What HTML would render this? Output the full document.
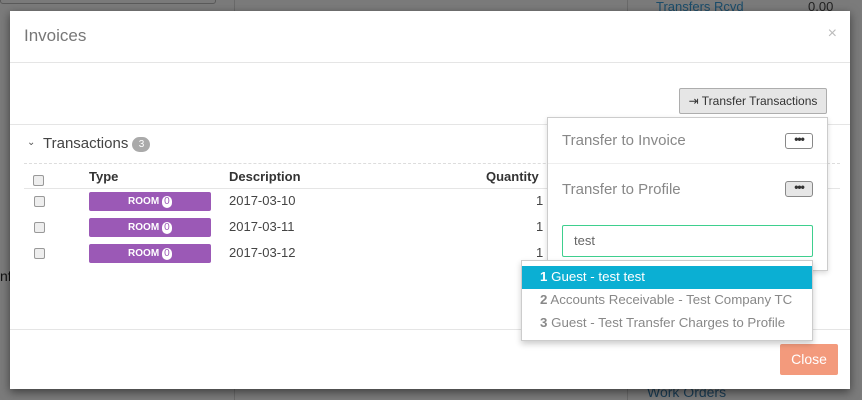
<!DOCTYPE html>
<html><head><style>
*{box-sizing:border-box;margin:0;padding:0}
body{width:862px;height:400px;overflow:hidden;background:#7b7b7b;font-family:"Liberation Sans",sans-serif;position:relative;color:#333}
.a{position:absolute}
.modal{left:10px;top:11px;width:840px;height:378px;background:#fff;box-shadow:0 3px 9px rgba(0,0,0,.5)}
.hl{height:1px;background:#e5e5e5}
.cb{width:11px;height:11px;border:1px solid #999;border-radius:2px;background:#eee}
.badge{width:122px;height:19px;background:#9b59b6;border-radius:2px;color:#fff;font-size:10px;font-weight:bold;text-align:center;line-height:19px}
.badge span{display:inline-block;background:#fff;color:#9b59b6;border-radius:5px;width:10px;height:12px;line-height:12px;font-weight:normal;font-size:10px}
.dots{width:28px;height:16px;border:1px solid #888;border-radius:3px;font-size:12px;text-align:center;line-height:11px;font-weight:bold;color:#333;letter-spacing:-1px}
</style></head><body>
<div class="a" style="left:0;top:-4px;width:216px;height:8px;border:1px solid #5a5a5a;border-radius:3px"></div>
<div class="a" style="left:234px;top:0;width:1px;height:400px;background:#6a6a6a"></div>
<div class="a" style="left:627px;top:0;width:1px;height:400px;background:#6a6a6a"></div>
<div class="a" style="left:656px;top:-1px;font-size:13px;color:#1b4d6b">Transfers Rcvd</div>
<div class="a" style="left:808px;top:-1px;font-size:13px;color:#222">0.00</div>
<div class="a" style="left:647px;top:384px;font-size:14px;color:#1b3d55">Work Orders</div>
<div class="a" style="left:0;top:268px;font-size:14px;color:#111">nf</div>
<div class="a modal">
 <div class="a" style="left:14px;top:15px;font-size:17px;color:#777">Invoices</div>
 <div class="a" style="right:13px;top:14px;font-size:16px;color:#bbb">×</div>
 <div class="a hl" style="left:0;top:51px;width:840px"></div>
 <div class="a hl" style="left:0;top:113px;width:840px"></div>
 <div class="a hl" style="left:0;top:318px;width:840px"></div>
 <div class="a" style="left:669px;top:77px;width:148px;height:26px;background:#e6e6e6;border:1px solid #adadad;border-radius:2px;font-size:12px;color:#333;line-height:24px;text-align:center">⇥ Transfer Transactions</div>
 <div class="a" style="left:17px;top:126px;font-size:10px;color:#555">⌄</div>
 <div class="a" style="left:33px;top:124px;font-size:15px;color:#444">Transactions <span style="display:inline-block;background:#aaa;color:#fff;border-radius:8px;font-size:10px;width:18px;height:15px;line-height:15px;text-align:center;vertical-align:1px">3</span></div>
 <div class="a" style="left:14px;top:152px;width:816px;border-top:1px dashed #ddd"></div>
 <div class="a cb" style="left:23px;top:164px"></div>
 <div class="a" style="left:79px;top:158px;font-size:13px;font-weight:bold;color:#333">Type</div>
 <div class="a" style="left:219px;top:158px;font-size:13px;font-weight:bold;color:#333">Description</div>
 <div class="a" style="left:476px;top:158px;font-size:13px;font-weight:bold;color:#333">Quantity</div>
 <div class="a hl" style="left:14px;top:177px;width:816px"></div>
 <div class="a cb" style="left:24px;top:185px"></div><div class="a badge" style="left:79px;top:181px">ROOM <span>0</span></div><div class="a" style="left:219px;top:182px;font-size:13px;color:#444">2017-03-10</div><div class="a" style="left:526px;top:182px;font-size:13px;color:#444">1</div>
 <div class="a cb" style="left:24px;top:211px"></div><div class="a badge" style="left:79px;top:207px">ROOM <span>0</span></div><div class="a" style="left:219px;top:208px;font-size:13px;color:#444">2017-03-11</div><div class="a" style="left:526px;top:208px;font-size:13px;color:#444">1</div>
 <div class="a cb" style="left:24px;top:237px"></div><div class="a badge" style="left:79px;top:233px">ROOM <span>0</span></div><div class="a" style="left:219px;top:234px;font-size:13px;color:#444">2017-03-12</div><div class="a" style="left:526px;top:234px;font-size:13px;color:#444">1</div>
 <div class="a" style="left:770px;top:333px;width:58px;height:31px;background:#f39a7c;border-radius:2px;color:#fff;font-size:14px;text-align:center;line-height:31px">Close</div>
</div>
<div class="a" style="left:547px;top:117px;width:281px;height:154px;background:#fff;border:1px solid #ccc;box-shadow:0 2px 5px rgba(0,0,0,.15)">
 <div class="a" style="left:14px;top:14px;font-size:15px;color:#888">Transfer to Invoice</div>
 <div class="a dots" style="left:237px;top:15px">•••</div>
 <div class="a hl" style="left:0;top:45px;width:279px;background:#eee"></div>
 <div class="a" style="left:14px;top:63px;font-size:15px;color:#888">Transfer to Profile</div>
 <div class="a dots" style="left:237px;top:63px;background:#e6e6e6">•••</div>
 <div class="a" style="left:14px;top:107px;width:251px;height:32px;border:1px solid #3ecf8e;border-radius:2px;font-size:13px;color:#666;padding:7px 11px">test</div>
</div>
<div class="a" style="left:521px;top:260px;width:292px;height:81px;background:#fff;border:1px solid #ccc;box-shadow:0 3px 6px rgba(0,0,0,.2);font-size:13.3px;color:#888">
 <div style="margin-top:5px;height:23px;background:#0bafd3;color:#fff;padding:3px 18px"><b>1</b> Guest - test test</div>
 <div style="height:23px;padding:3px 18px"><b>2</b> Accounts Receivable - Test Company TC</div>
 <div style="height:23px;padding:3px 18px"><b>3</b> Guest - Test Transfer Charges to Profile</div>
</div>
</body></html>
